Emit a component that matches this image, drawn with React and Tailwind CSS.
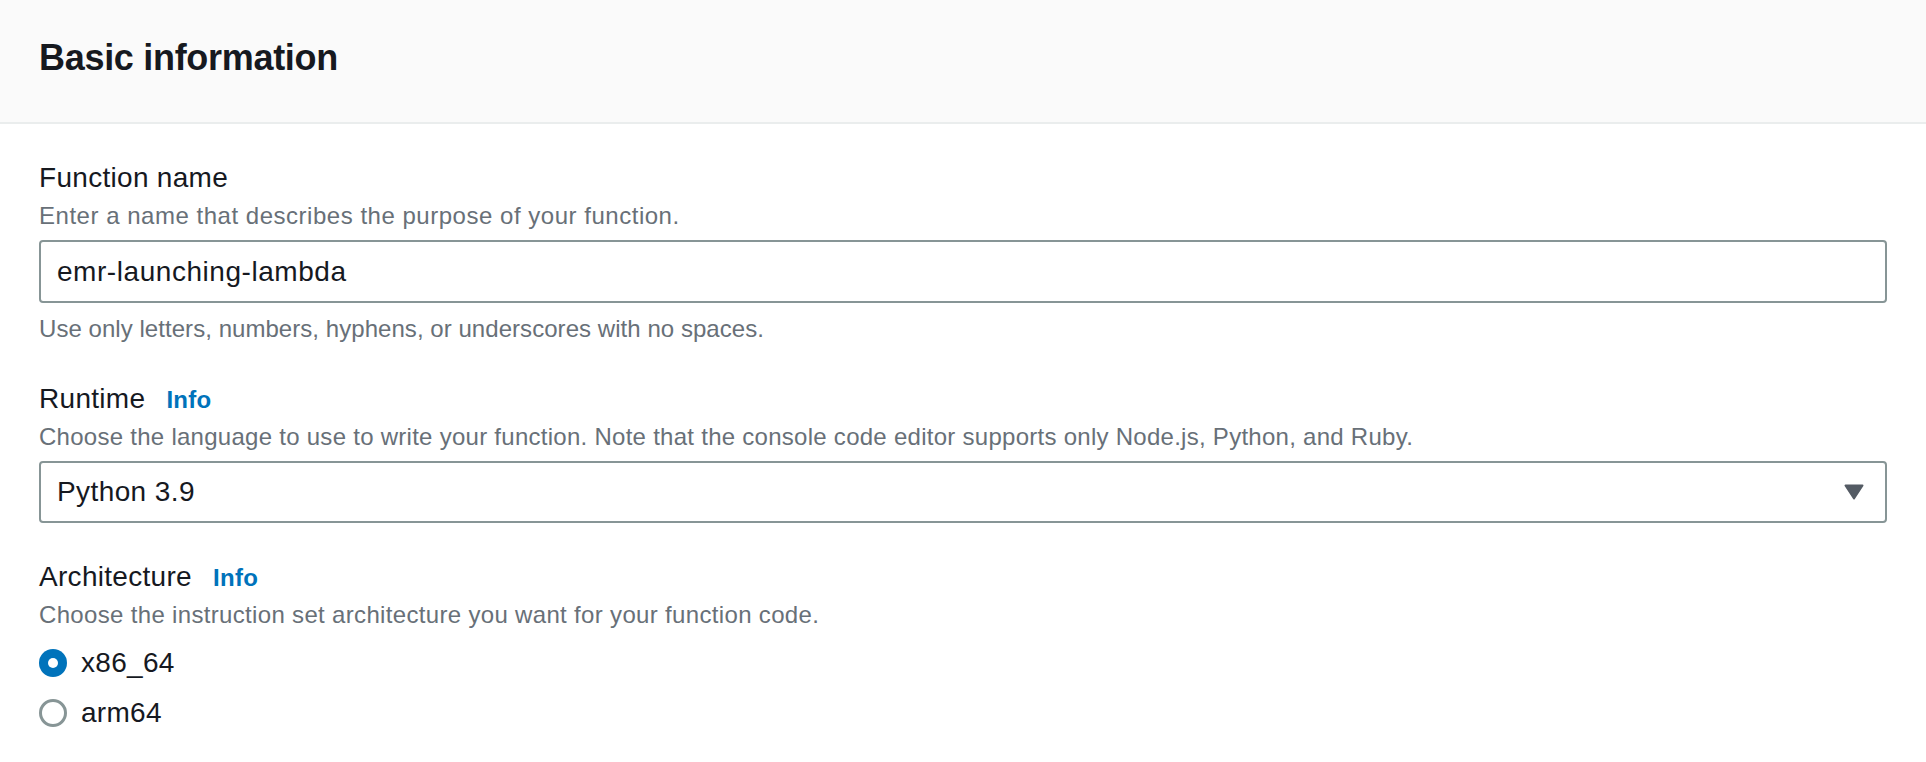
import { useState } from 'react';

const font = { fontFamily: '"Liberation Sans", Arial, sans-serif' };

function Label({ children, info }) {
  return (
    <div className="flex items-baseline h-[44px] leading-[44px]">
      <span className="text-[28px] tracking-[0.3px] text-[#16191f]">{children}</span>
      {info && <a className="ml-[21px] text-[24px] font-bold tracking-[0.3px] text-[#0073bb]">Info</a>}
    </div>
  );
}

function Hint({ children, className = 'tracking-[0.27px]' }) {
  return <div className={`text-[24px] leading-[32px] text-[#687078] ${className}`}>{children}</div>;
}

function Radio({ checked, label, onClick }) {
  return (
    <div className="flex items-center h-[50px] cursor-pointer" onClick={onClick}>
      {checked ? (
        <span className="w-[28px] h-[28px] rounded-full bg-[#0073bb] flex items-center justify-center">
          <span className="w-[10px] h-[10px] rounded-full bg-white" />
        </span>
      ) : (
        <span className="w-[28px] h-[28px] rounded-full border-[3px] border-[#879596] bg-white" />
      )}
      <span className="ml-[14px] text-[28px] tracking-[0.3px] text-[#16191f]">{label}</span>
    </div>
  );
}

export default function App() {
  const [arch, setArch] = useState('x86_64');

  return (
    <div className="min-h-[762px] bg-white" style={font}>
      <div className="h-[124px] border-b-2 border-[#eaeded] bg-[#fafafa] px-[39px] pt-[36px]">
        <h2 className="text-[36px] leading-[44px] font-bold tracking-[-0.3px] text-[#16191f]">Basic information</h2>
      </div>

      <div className="px-[39px] pt-[32px]">
        <Label>Function name</Label>
        <Hint className="tracking-[0.52px]">Enter a name that describes the purpose of your function.</Hint>
        <div className="mt-[8px] h-[63px] border-2 border-[#879596] rounded-[4px] flex items-center pl-[16px] text-[28px] tracking-[0.55px] text-[#16191f]">
          emr-launching-lambda
        </div>
        <Hint className="mt-[10px] tracking-[0.05px]">Use only letters, numbers, hyphens, or underscores with no spaces.</Hint>

        <div className="mt-[32px]">
          <Label info>Runtime</Label>
        </div>
        <Hint>Choose the language to use to write your function. Note that the console code editor supports only Node.js, Python, and Ruby.</Hint>
        <div className="mt-[8px] h-[62px] border-2 border-[#879596] rounded-[4px] flex items-center justify-between pl-[16px] pr-[21px] text-[28px] tracking-[0.4px] text-[#16191f]">
          <span>Python 3.9</span>
          <svg width="20" height="16" viewBox="0 0 20 16">
            <path d="M1.5 1.5 L18.5 1.5 L10 14.5 Z" fill="#545b64" stroke="#545b64" strokeWidth="2" strokeLinejoin="round" />
          </svg>
        </div>

        <div className="mt-[32px]">
          <Label info>Architecture</Label>
        </div>
        <Hint className="tracking-[0.33px]">Choose the instruction set architecture you want for your function code.</Hint>
        <div className="mt-[7px]">
          <Radio checked={arch === 'x86_64'} label="x86_64" onClick={() => setArch('x86_64')} />
          <Radio checked={arch === 'arm64'} label="arm64" onClick={() => setArch('arm64')} />
        </div>
      </div>
    </div>
  );
}
